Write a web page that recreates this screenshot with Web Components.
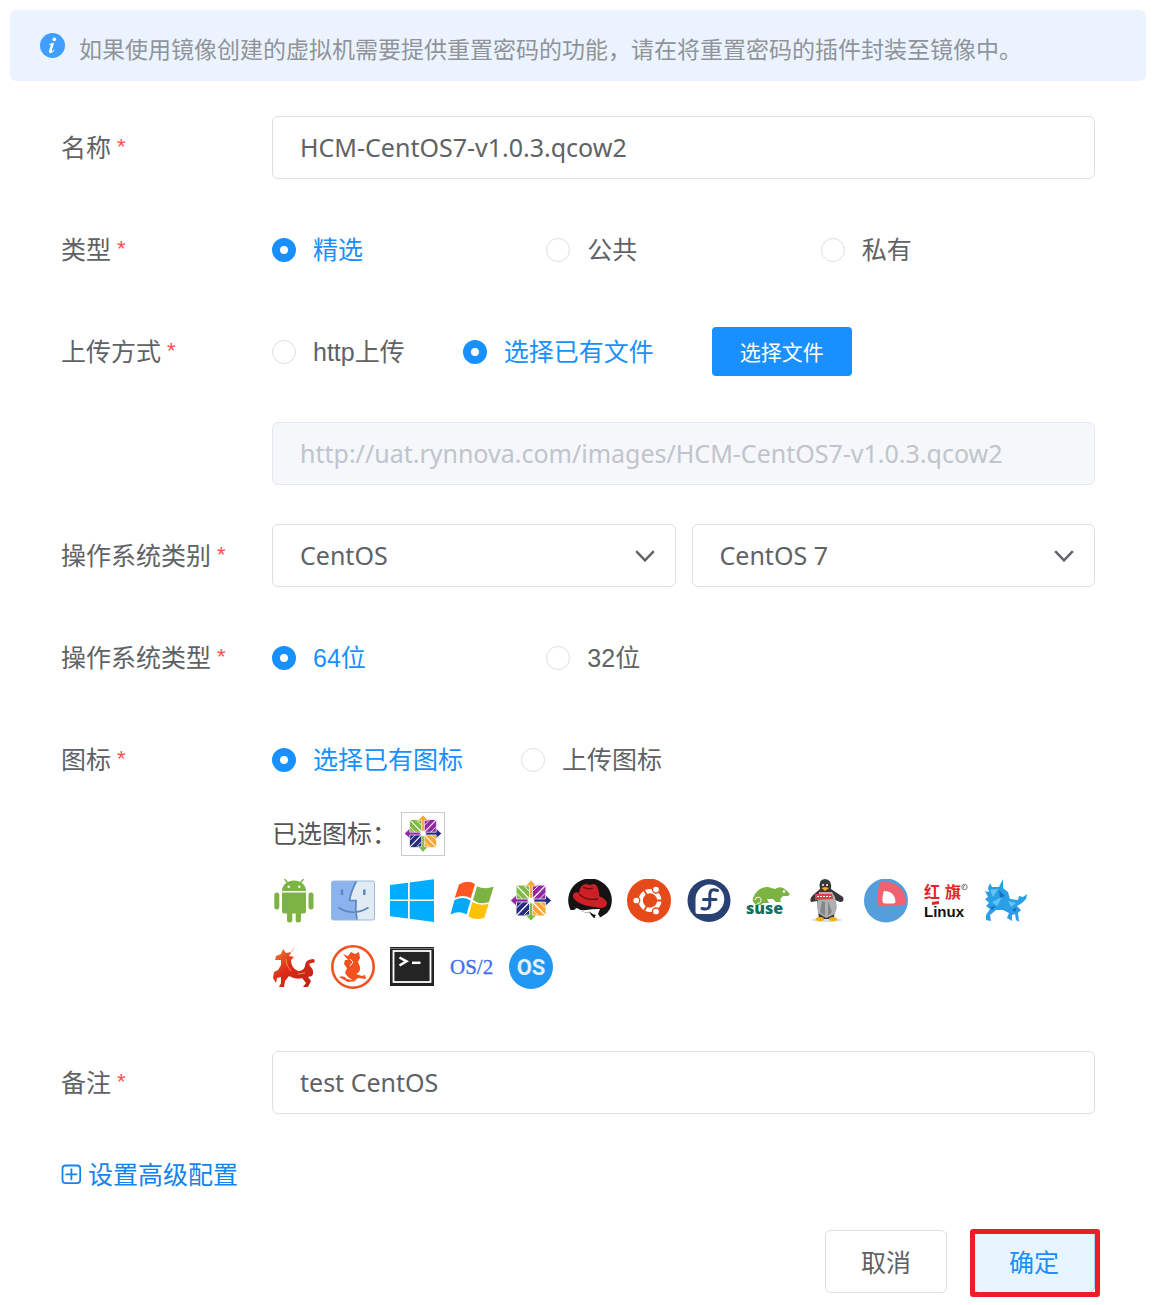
<!DOCTYPE html>
<html lang="zh-CN">
<head>
<meta charset="utf-8">
<meta name="viewport" content="width=device-width, initial-scale=1">
<title>镜像</title>
<style>
  body { margin: 0; background: #fff; }
</style>
</head>
<body>
<image-form></image-form>

<script>
const SHARED = `
  *, *::before, *::after { box-sizing: border-box; }
  input, select, button { font: inherit; color: inherit; margin: 0; }
`;

class BaseElement extends HTMLElement {
  connectedCallback() {
    if (this.shadowRoot) return;
    this.attachShadow({ mode: 'open' }).innerHTML = `<style>${SHARED}${this.styles()}</style>${this.markup()}`;
  }
  styles() { return ':host { display: block; }'; }
  markup() { return '<slot></slot>'; }
}

/* Blue information banner */
class InfoAlert extends BaseElement {
  styles() {
    return `
      :host { display: flex; align-items: flex-start; gap: 14px; padding: 22px 30px 15px;
              border-radius: 6px; background: #ebf3ff; color: #909399; font-size: 23px; line-height: 34px; }
      svg { flex: none; width: 25px; height: 25px; margin-top: 1px; }
      p { margin: 0; }
    `;
  }
  markup() {
    return `<svg viewBox="0 0 25 25" aria-hidden="true">
        <circle cx="12.5" cy="12.5" r="12.5" fill="#409eff"/>
        <circle cx="14.3" cy="6.4" r="1.8" fill="#fff"/>
        <path d="M9.2 11.2 Q11.5 9.6 14.1 9.7 L11.8 17.6 Q11.6 18.7 12.4 18.2 Q13.3 17.5 14 16.5 L14.6 17 Q12.6 20.3 10.3 20.2 Q8.5 20.1 9.1 17.8 L10.7 12.4 Q11 11.4 9.3 11.9Z" fill="#fff"/>
      </svg><p><slot></slot></p>`;
  }
}

/* Label column and control column */
class FormRow extends BaseElement {
  styles() {
    return `
      :host { display: grid; grid-template-columns: 211px minmax(0, 1fr); min-height: 63px; align-items: start; }
      .label { display: flex; align-items: center; height: 63px; padding-bottom: 2px; }
      .star { color: #ff4d4f; font-family: "Liberation Sans", sans-serif; font-size: 22px; margin-left: 6px; }
    `;
  }
  markup() {
    const star = this.hasAttribute('required') ? '<span class="star">*</span>' : '';
    return `<div class="label"><slot name="label"></slot>${star}</div><div><slot></slot></div>`;
  }
}

class TextField extends BaseElement {
  styles() {
    return `
      :host { display: block; }
      input { display: block; width: 100%; height: 63px; padding: 0 27px 2px; border: 1px solid #dcdfe6;
              border-radius: 6px; background: #fff; outline: 0; color: #606266; font-size: 25px; }
      input:disabled { background: #f5f7fa; border-color: #e4e7ed; color: #c0c4cc; }
    `;
  }
  markup() {
    const label = this.getAttribute('label');
    const value = this.getAttribute('value');
    const off = this.hasAttribute('disabled');
    return `<form-row ${label ? 'required' : ''}>
        ${label ? `<label slot="label" for="field">${label}</label>` : ''}
        <input id="field" type="text" value="${value}" ${off ? 'disabled' : ''} ${label ? '' : 'aria-label="URL"'}>
      </form-row>`;
  }
}

class SelectField extends BaseElement {
  styles() {
    return `
      :host { display: block; }
      .pair { display: grid; grid-template-columns: 1fr 1fr; gap: 16px; }
      .box { display: grid; align-items: center; }
      .box > * { grid-area: 1 / 1; }
      select { appearance: none; width: 100%; height: 63px; padding: 0 60px 2px 27px; border: 1px solid #dcdfe6;
               border-radius: 6px; background: #fff; color: #606266; font-size: 25px; }
      svg { justify-self: end; width: 20px; height: 12px; margin-right: 21px; pointer-events: none; }
    `;
  }
  markup() {
    const boxes = this.getAttribute('values').split('|').map((v, i) => `
      <div class="box">
        <select id="s${i}" ${i ? `aria-label="${this.getAttribute('label')}"` : ''}><option>${v}</option></select>
        <svg viewBox="0 0 20 12" aria-hidden="true"><path d="M1.2 1.2 L10 10.4 L18.8 1.2" fill="none" stroke="#606266" stroke-width="2.4"/></svg>
      </div>`).join('');
    return `<form-row required><label slot="label" for="s0">${this.getAttribute('label')}</label>
      <div class="pair">${boxes}</div></form-row>`;
  }
}

/* Radio group; extra content can be slotted after the options and below them */
class RadioField extends BaseElement {
  styles() {
    return `
      :host { display: block; }
      .options { display: flex; align-items: center; gap: 58px; height: 63px; }
      :host([columns]) .options { display: grid; grid-template-columns: repeat(3, 1fr); gap: 0; }
      .option { display: flex; align-items: center; gap: 17px; white-space: nowrap;
                font-family: "Liberation Sans", "Noto Sans CJK SC", sans-serif; }
      input { appearance: none; flex: none; width: 24px; height: 24px; border: 1px solid #dcdfe6; border-radius: 50%; background: #fff; }
      input:checked { border: 8px solid #1890ff; }
      input:checked + span { color: #1890ff; }
    `;
  }
  markup() {
    const on = Number(this.getAttribute('selected') || 0);
    const label = this.getAttribute('label');
    const options = this.getAttribute('options').split('|').map((o, i) => `
      <label class="option"><input type="radio" name="choice" ${i === on ? 'checked' : ''}><span>${o}</span></label>`).join('');
    return `<form-row required><span slot="label" id="caption">${label}</span>
      <div class="options" role="radiogroup" aria-labelledby="caption">${options}<slot name="after"></slot></div>
      <slot></slot></form-row>`;
  }
}

class UiButton extends BaseElement {
  styles() {
    return `
      :host { display: block; position: relative; }
      button { display: block; min-width: 122px; height: 63px; padding: 0 26px; border: 1px solid #dcdfe6;
               border-radius: 6px; background: #fff; color: #606266; font-size: 25px; }
      :host([kind="primary"]) button { min-width: 140px; height: 49px; border: 0; border-radius: 4px;
               background: #1890ff; color: #fff; font-size: 21px; }
      :host([kind="plain"]) button { border-color: #a3d3ff; background: #e8f4ff; color: #1890ff; }
      :host([marked])::after { content: ""; position: absolute; inset: -1px -5px -4px -3px; border: 5px solid #ee1c25;
               border-radius: 3px; pointer-events: none; }
    `;
  }
  markup() { return '<button type="button"><slot></slot></button>'; }
}

const CENTOS = `
  <g>
    <path d="M7.500 6.500H21V20.500H7.500Z" fill="#80ba45"/><path d="M23 6.500H36.500V20.500H23Z" fill="#9028a6"/>
    <path d="M7.500 22.500H21V36.500H7.500Z" fill="#262b82"/><path d="M23 22.500H36.500V36.500H23Z" fill="#f9a635"/>
    <path d="M7.500 6.500L36.500 36.500M36.500 6.500L7.500 36.500" stroke="#fff" stroke-width="1.200"/>
    <path d="M15 7L21 13M7.500 14L14 20.500M29 7L23 13M36.500 14L30 20.500M15 36L21 30M7.500 29L14 22.500M29 36L23 30M36.500 29L30 22.500" stroke="#fff" stroke-width=".900"/>
    <g stroke="#fff" stroke-width=".700">
    <path d="M22 1L27.500 7H23.500V19H20.500V7H16.500Z" fill="#f9a635"/>
    <path d="M42.500 21.500L36.500 27V23H25V20H36.500V16Z" fill="#262b82"/>
    <path d="M22 42L27.500 36H23.500V24H20.500V36H16.500Z" fill="#80ba45"/>
    <path d="M1.500 21.500L7.500 16V20H19V23H7.500V27Z" fill="#9028a6"/></g>
    <circle cx="22" cy="21.500" r="2.600" fill="#fff"/>
  </g>`;

const ICONS = {
  Android: `<g fill="#7cb342"><path d="M10 12A12 10.500 0 0 1 34 12Z"/><path d="M12.500 0L16.500 5M31.500 0L27.500 5" stroke="#7cb342" stroke-width="1.500"/>
    <path d="M10 13.500H34V32Q34 34.500 31.500 34.500H29V41Q29 43.500 26.300 43.500T23.700 41V34.500H20.300V41Q20.300 43.500 17.600 43.500T15 41V34.500H12.500Q10 34.500 10 32Z"/>
    <rect x="2.300" y="13.500" width="5" height="17" rx="2.500"/><rect x="36.500" y="13.500" width="5" height="17" rx="2.500"/></g>
    <circle cx="16.700" cy="7.800" r="1.200" fill="#fff"/><circle cx="27.300" cy="7.800" r="1.200" fill="#fff"/>`,
  macOS: `<rect x=".500" y="2" width="43" height="39" rx="2" fill="#e0ebf4"/><path d="M2.500 2H25.500Q20 12 18.500 21.500H25Q24 31 26 41H2.500Q.500 41 .500 39V4Q.500 2 2.500 2Z" fill="#8bb4ee"/>
    <path d="M25.500 2Q20 12 18.500 21.500H25Q24 31 26 41M7.500 28.500Q22 38 37.500 28.500" fill="none" stroke="#5c87bd" stroke-width="1.700"/>
    <path d="M11 10.500V16M33.300 10.500V16" stroke="#5c87bd" stroke-width="2.500"/><rect x=".500" y="2" width="43" height="39" rx="2" fill="none" stroke="#9bb9dc"/>`,
  'Windows 10': `<path d="M0 6L18 3.700V20.500H0ZM19.700 3.400L44 .300V20.500H19.700ZM0 22H18V39.500L0 37.200ZM19.700 22H44V43L19.700 39.800Z" fill="#00adff"/>`,
  Windows: `<path d="M9 5.500Q17 .500 25 5L20.800 19Q13 15 4.700 19Z" fill="#ff5722"/><path d="M27 7.300Q35 11 43.700 7.500L39 23Q30 26.500 23 21Z" fill="#7cb342"/>
    <path d="M4.500 21Q13 17 20.500 21.500L16.500 35.500Q9 31 .500 35.500Z" fill="#03a9f4"/><path d="M22.300 23Q30 27.500 38.700 24.500L34.500 38.500Q26 42 18.500 37.500Z" fill="#ffc107"/>`,
  CentOS: CENTOS,
  'Red Hat': `<path d="M2.500 31A21.800 21.800 0 1 1 42 30L39 34L33 38L26 39L23 34L15 33L9 29L6 31Z" fill="#151313"/>
    <path d="M5 27Q10 32 18 31Q24 30 32 30L30 35L32 38L29 40L26 38L24 34L16 33Q10 32 5 27Z" fill="#fff"/><path d="M21 32L24 35L28 36L26 39L23 36Z" fill="#151313"/>
    <path d="M5 16Q6 12 11 14Q12 5 19 5Q22 7 25 5Q30 5 31 14L31 17Q39 20 39 25Q37 31 27 28Q9 26 5 18Z" fill="#cf1f26"/>
    <path d="M11 15Q18 22 30 20M15 8Q20 11 25 9" fill="none" stroke="#5d1215" stroke-width="1.300"/>`,
  Ubuntu: `<circle cx="22" cy="21.500" r="22" fill="#e64a19"/><circle cx="23" cy="21.500" r="9.300" fill="none" stroke="#fff" stroke-width="4.300"/>
    <path d="M23 21.500H38M23 21.500L15.500 8.500M23 21.500L15.500 34.500" stroke="#e64a19" stroke-width="1.800"/>
    <g fill="#fff" stroke="#e64a19" stroke-width="1.300"><circle cx="9.300" cy="21.500" r="3.500"/><circle cx="29" cy="10.500" r="3.500"/><circle cx="29" cy="32.500" r="3.500"/></g>`,
  Fedora: `<circle cx="22" cy="21.500" r="21.500" fill="#294172"/><path d="M22.500 5.500A14.500 14.500 0 1 1 22.500 35H10.500Q8.500 35 8.500 33V20A14.500 14.500 0 0 1 22.500 5.500Z" fill="#fff"/>
    <path d="M30.500 11.500Q23 8.500 22.800 16V25.500Q22.500 31.500 15 29.500M16.500 20.500H29" fill="none" stroke="#294172" stroke-width="3" stroke-linecap="round"/>`,
  SUSE: `<path d="M7 19Q11 8 22 8L29 10Q35 6 40 11L44 15L42 17H37Q33 20 35 23H30L27 20H21L23 24H17Q17 20 13 19Q19 20 17 24Q14 28 9 25Q6 22 7 19Z" fill="#7cb342"/>
    <circle cx="38" cy="12.500" r="1.300" fill="#fff"/><path d="M9 21A3 3 0 1 1 11 24" fill="none" stroke="#fff"/>
    <text x="0" y="35" font-family="Open Sans, sans-serif" font-weight="800" font-size="16" fill="#13705c">suse</text>`,
  'Oracle Linux': `<ellipse cx="22" cy="41" rx="15" ry="2" fill="#ddd"/><path d="M15 10Q13 0 20 0Q27 0 26 10L38 18Q40 23 35 23L30 21L29 40H14L12 22L6 23Q4 20 8 16Z" fill="#383838"/>
    <path d="M14 13L27 13L30 18L32 28L30 35L21 39L13 34L12 26Z" fill="#aeb0b1"/><path d="M17 22L15 33L20 37V23ZM23 22L27 33L23 37Z" fill="#858788"/>
    <path d="M10 15L27 15L28 20L10 21Z" fill="#d94343"/><path d="M12 17.500H26" stroke="#fff" stroke-dasharray="2 1" stroke-width="1"/>
    <circle cx="18" cy="6" r="1" fill="#fff"/><circle cx="22" cy="6" r="1" fill="#fff"/><path d="M16.500 9L20 8L24 9L20 12Z" fill="#f5ad17"/>
    <ellipse cx="15" cy="40" rx="4" ry="2" fill="#f5ad17"/><ellipse cx="28" cy="40" rx="4" ry="2" fill="#f5ad17"/>`,
  Deepin: `<circle cx="22" cy="21.500" r="22" fill="#549fdb"/><path d="M17.500 2.500Q26 2 33 6Q42 13 42.300 23Q42 26 39 26Q28 28 16 27Q13.500 27 13.500 24Q13 12 16 4Q16.300 2.800 17.500 2.500Z" fill="#f2616f"/>
    <path d="M21 12Q30 12 31.500 22Q31.500 24.500 29 24.500H21Q18.500 24.500 18.500 22Q18.200 17 19.500 13Q19.800 12.200 21 12Z" fill="#fff"/>`,
  'Red Flag': `<g font-family="Noto Sans CJK SC, sans-serif" font-weight="700" fill="#e5262a"><text x="0" y="19" font-size="16">红</text><text x="21" y="19" font-size="16">旗</text></g>
    <path d="M8 24.500L15 23.500" stroke="#e5262a" stroke-width="3"/><circle cx="40.500" cy="8" r="2.700" fill="none" stroke="#777" stroke-width="1"/><path d="M39.700 9.500V6.700H41.300" stroke="#777" stroke-width=".800" fill="none"/>
    <text x="0" y="38" font-family="Liberation Sans, sans-serif" font-weight="700" font-size="15" fill="#111">Linux</text>`,
  Kylin: `<path d="M20 0L16 8L9 8L7 4L5 9L6 13L2 12L5 18L2 20L6 24L3 27L7 30L3 36L3 41L8 42L7 36L13 31L20 31L26 34L24 39L29 42L29 36L32 35L33 41L36 43L35 34L38 31L34 27L39 24L43 20L44 15L40 18L36 17L35 21L27 20L25 13L20 9Z" fill="#2a9fe6"/>
    <path d="M7 11L15 10L10 18ZM9 23L19 18L14 27ZM25 22L33 24L28 28Z" fill="#63c5f5"/>
    <path d="M16 11L22 17L17 19ZM7 28L13 27L9 31ZM29 31L34 28L32 33Z" fill="#1173c4"/>`,
  'Neo Kylin': `<defs><linearGradient id="fire" x1="0" y1="0" x2="1" y2="1"><stop offset="0" stop-color="#ee8a3a"/><stop offset=".450" stop-color="#dd2a16"/><stop offset="1" stop-color="#b92218"/></linearGradient></defs>
    <path d="M23 1L20 7L14 8L11 4L9 9L4 11L3 15L9 15L9 20L6 25L2 27L1 33L4 38L5 33L9 32L9 38L7 42L12 42L13 36L17 31Q24 35 30 33L34 38L31 42L36 42L39 36L36 32L40 31Q43 26 38 21Q36 18 40 18L43 17L42 14Q33 14 33 21Q32 26 26 26Q19 23 19 15L22 12L17 11Z" fill="url(#fire)"/>
    <path d="M14 14L15 20L19 26M26 29L33 28" fill="none" stroke="#f0a04b" stroke-width=".900"/>`,
  'Kylin Circle': `<circle cx="22" cy="22" r="20.700" fill="#fff" stroke="#f4511e" stroke-width="2.600"/>
    <path d="M12 9L17 11L20 7L24 9L28 7L29 13L27 17L29 22Q30 27 25 29L31 31L34 30L35 34L27 33L23 36L17 32L14 28L16 23L13 19L14 15L17 15ZM8 32Q13 30 16 34L26 36L17 37Z" fill="#f4511e"/><path d="M19 14L22 17L19 21" fill="none" stroke="#fff" stroke-width="1"/>`,
  Terminal: `<rect y="2" width="44" height="39" fill="#242424"/><rect x="3.500" y="6" width="37" height="31" fill="none" stroke="#fff" stroke-width="1.800"/><path d="M0 3.500H44" stroke="#777" stroke-width="1"/>
    <path d="M9.500 12.500L16.500 16.300L9.500 20.500" fill="none" stroke="#fff" stroke-width="2.500"/><path d="M22 17.800H30.500" stroke="#fff" stroke-width="2.500"/>`,
  'OS/2': `<text x="0" y="29" font-family="Liberation Serif, serif" font-size="21" fill="#416cf2" stroke="#416cf2" stroke-width=".300">OS/2</text>`,
  Other: `<circle cx="22" cy="22" r="22" fill="#2196f3"/><text x="22" y="30" text-anchor="middle" font-family="Roboto, sans-serif" font-weight="700" font-size="22" fill="#e3f2fd">OS</text>`
};

class OsIcon extends BaseElement {
  styles() { return ':host { display: block; width: 44px; height: 44px; } svg { display: block; width: 100%; height: 100%; }'; }
  markup() { return `<svg viewBox="0 0 44 44" aria-hidden="true">${ICONS[this.getAttribute('name')]}</svg>`; }
}

class IconPicker extends BaseElement {
  styles() {
    return `
      :host { display: block; margin-top: 21px; }
      .chosen { display: flex; align-items: center; gap: 4px; }
      .chosen span { line-height: 42px; padding-bottom: 2px; color: #555; }
      .frame { display: grid; place-items: center; width: 44px; height: 44px; border: 1px solid #ccc; }
      .frame os-icon { width: 40px; height: 40px; }
      .grid { display: grid; grid-template-columns: repeat(13, 1fr); row-gap: 22px; margin-top: 23px; padding-right: 53px; }
      button { display: block; width: 44px; height: 44px; padding: 0; border: 0; background: none; }
    `;
  }
  markup() {
    return `<div class="chosen"><span>已选图标：</span><div class="frame"><os-icon name="CentOS"></os-icon></div></div>
      <div class="grid">${Object.keys(ICONS).map(n => `<button type="button" aria-label="${n}"><os-icon name="${n}"></os-icon></button>`).join('')}</div>`;
  }
}

class AdvancedLink extends BaseElement {
  styles() {
    return `
      :host { display: flex; }
      a { display: flex; align-items: center; gap: 6px; color: #1583ea; text-decoration: none; line-height: 34px; }
      svg { width: 21px; height: 21px; }
    `;
  }
  markup() {
    return `<a href="#advanced"><svg viewBox="0 0 21 21" aria-hidden="true"><path d="M4.500 1.500H16Q19.200 1.500 19.200 4.500V16Q19.200 19.200 16 19.200H4.500Q1.500 19.200 1.500 16V4.500Q1.500 1.500 4.500 1.500ZM10.400 4.500V16.200M4.500 10.400H16.200" fill="none" stroke="#1583ea" stroke-width="1.800"/></svg><slot></slot></a>`;
  }
}

class ImageForm extends BaseElement {
  styles() {
    return `
      :host { display: block; padding: 10px 8px 10px 10px; font-family: "Noto Sans", "Noto Sans CJK SC", sans-serif;
              font-size: 25px; line-height: 34px; color: #606266; }
      form { display: flex; flex-direction: column; gap: 39px; padding: 35px 51px 0; }
      .last { display: flex; flex-direction: column; margin-top: 23px; }
      advanced-link { margin-top: 43px; }
      .actions { display: flex; justify-content: flex-end; gap: 26px; margin-top: 39px; }
    `;
  }
  markup() {
    return `
      <info-alert>如果使用镜像创建的虚拟机需要提供重置密码的功能，请在将重置密码的插件封装至镜像中。</info-alert>
      <form>
        <text-field label="名称" value="HCM-CentOS7-v1.0.3.qcow2"></text-field>
        <radio-field columns label="类型" options="精选|公共|私有"></radio-field>
        <radio-field label="上传方式" options="http上传|选择已有文件" selected="1"><ui-button slot="after" kind="primary">选择文件</ui-button></radio-field>
        <text-field disabled value="http://uat.rynnova.com/images/HCM-CentOS7-v1.0.3.qcow2"></text-field>
        <select-field label="操作系统类别" values="CentOS|CentOS 7"></select-field>
        <radio-field columns label="操作系统类型" options="64位|32位"></radio-field>
        <radio-field label="图标" options="选择已有图标|上传图标"><icon-picker></icon-picker></radio-field>
        <div class="last">
          <text-field label="备注" value="test CentOS"></text-field>
          <advanced-link>设置高级配置</advanced-link>
          <div class="actions"><ui-button>取消</ui-button><ui-button kind="plain" marked>确定</ui-button></div>
        </div>
      </form>`;
  }
}

customElements.define('info-alert', InfoAlert);
customElements.define('form-row', FormRow);
customElements.define('text-field', TextField);
customElements.define('select-field', SelectField);
customElements.define('radio-field', RadioField);
customElements.define('ui-button', UiButton);
customElements.define('os-icon', OsIcon);
customElements.define('icon-picker', IconPicker);
customElements.define('advanced-link', AdvancedLink);
customElements.define('image-form', ImageForm);
</script>
</body>
</html>
